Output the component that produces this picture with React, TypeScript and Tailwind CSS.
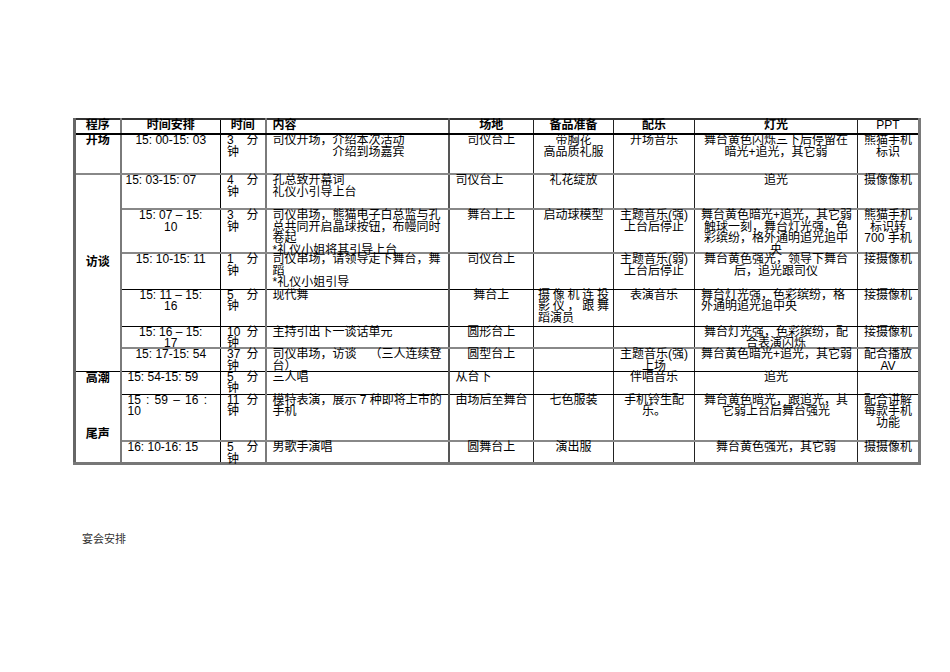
import React from "react";

const colR = [
  "border-r-2 border-r-[#7a7a7a]",
  "border-r border-r-black",
  "border-r-2 border-r-[#7a7a7a]",
  "border-r-2 border-r-[#555]",
  "border-r border-r-[#222]",
  "border-r border-r-[#222]",
  "border-r border-r-[#222]",
  "border-r border-r-[#222]",
  "border-r-[3px] border-r-[#7a7a7a]",
];

const rowB = [
  "border-b-2 border-b-black",
  "border-b-2 border-b-[#888]",
  "border-b-2 border-b-[#888]",
  "border-b-2 border-b-[#888]",
  "border-b border-b-black",
  "border-b border-b-black",
  "border-b-2 border-b-[#888]",
  "border-b border-b-black",
  "border-b border-b-black",
  "border-b-2 border-b-[#888]",
  "border-b-[3px] border-b-[#777]",
];

type CP = {
  r: number;
  c: number;
  a?: "c" | "l";
  span?: number;
  className?: string;
  children?: React.ReactNode;
};

function C({ r, c, a = "c", span, className = "", children }: CP) {
  const align = a === "c" ? "text-center" : "text-left";
  const last = r + (span ? span - 1 : 0);
  return (
    <td
      rowSpan={span}
      className={`p-0 align-top ${colR[c]} ${rowB[last]} ${
        c === 0 ? "border-l-[3px] border-l-[#666]" : ""
      } ${r === 0 ? "border-t-2 border-t-[#333]" : ""}`}
    >
      <div className={`h-0 px-[6px] whitespace-nowrap ${align} ${className}`}>
        {children}
      </div>
    </td>
  );
}

function L({ children, className = "" }: { children: React.ReactNode; className?: string }) {
  return <div className={`whitespace-nowrap ${className}`}>{children}</div>;
}

function J({ parts, className = "" }: { parts: string[]; className?: string }) {
  return (
    <div className={`flex justify-between whitespace-nowrap ${className}`}>
      {parts.map((p, i) => (
        <span key={i}>{p}</span>
      ))}
    </div>
  );
}

function T({ n }: { n: string }) {
  return (
    <>
      <J parts={[n, "分"]} />
      <L className="text-left">钟</L>
    </>
  );
}

export default function App() {
  return (
    <div className="w-[950px] h-[672px] bg-white pt-[118px] pl-[73px] font-['Liberation_Sans','Noto_Sans_CJK_SC',sans-serif] text-black">
      <table className="border-collapse table-fixed w-[845px] text-[12px] leading-[11.5px]">
        <colgroup>
          <col className="w-[46px]" />
          <col className="w-[100px]" />
          <col className="w-[45px]" />
          <col className="w-[183px]" />
          <col className="w-[85px]" />
          <col className="w-[80px]" />
          <col className="w-[81px]" />
          <col className="w-[163px]" />
          <col className="w-[62px]" />
        </colgroup>
        <tbody>
          <tr className="h-[15px]">
            <C r={0} c={0} className="font-bold">程序</C>
            <C r={0} c={1} className="font-bold">时间安排</C>
            <C r={0} c={2} className="font-bold">时间</C>
            <C r={0} c={3} a="l" className="font-bold">内容</C>
            <C r={0} c={4} className="font-bold">场地</C>
            <C r={0} c={5} className="font-bold">备品准备</C>
            <C r={0} c={6} className="font-bold">配乐</C>
            <C r={0} c={7} className="font-bold">灯光</C>
            <C r={0} c={8}>PPT</C>
          </tr>
          <tr className="h-[40px]">
            <C r={1} c={0} className="font-bold">开场</C>
            <C r={1} c={1}>15: 00-15: 03</C>
            <C r={1} c={2}><T n="3" /></C>
            <C r={1} c={3} a="l">
              <L>司仪开场，介绍本次活动</L>
              <L className="pl-[60px]">介绍到场嘉宾</L>
            </C>
            <C r={1} c={4}>司仪台上</C>
            <C r={1} c={5}>
              <L>带胸花</L>
              <L>高品质礼服</L>
            </C>
            <C r={1} c={6}>开场音乐</C>
            <C r={1} c={7}>
              <L>舞台黄色闪烁三下后停留在</L>
              <L>暗光+追光，其它弱</L>
            </C>
            <C r={1} c={8}>
              <L>熊猫手机</L>
              <L>标识</L>
            </C>
          </tr>
          <tr className="h-[35px]">
            <C r={2} c={0} span={6} className="font-bold pt-[82px]">访谈</C>
            <C r={2} c={1} a="l" className="!pl-[4px]">15: 03-15: 07</C>
            <C r={2} c={2}><T n="4" /></C>
            <C r={2} c={3} a="l">
              <L>孔总致开幕词</L>
              <L>礼仪小引导上台</L>
            </C>
            <C r={2} c={4} a="l">司仪台上</C>
            <C r={2} c={5}>礼花绽放</C>
            <C r={2} c={6}></C>
            <C r={2} c={7}>追光</C>
            <C r={2} c={8}>摄像像机</C>
          </tr>
          <tr className="h-[44px]">
            <C r={3} c={1}>
              <L>15: 07 – 15:</L>
              <L>10</L>
            </C>
            <C r={3} c={2}><T n="3" /></C>
            <C r={3} c={3} a="l">
              <L>司仪串场，熊猫电子白总监与孔</L>
              <L>总共同开启晶球按钮，布幔同时</L>
              <L>卷起</L>
              <L>*礼仪小姐将其引导上台</L>
            </C>
            <C r={3} c={4}>舞台上上</C>
            <C r={3} c={5}>启动球模型</C>
            <C r={3} c={6}>
              <L>主题音乐(强)</L>
              <L>上台后停止</L>
            </C>
            <C r={3} c={7}>
              <L>舞台黄色暗光+追光，其它弱</L>
              <L>触球一刻，舞台灯光强，色</L>
              <L>彩缤纷，格外通明追光追中</L>
              <L>央</L>
            </C>
            <C r={3} c={8}>
              <L>熊猫手机</L>
              <L>标识转</L>
              <L>700 手机</L>
            </C>
          </tr>
          <tr className="h-[36px]">
            <C r={4} c={1}>15: 10-15: 11</C>
            <C r={4} c={2}><T n="1" /></C>
            <C r={4} c={3} a="l">
              <L>司仪串场，请领导走下舞台，舞</L>
              <L>蹈</L>
              <L>*礼仪小姐引导</L>
            </C>
            <C r={4} c={4}>司仪台上</C>
            <C r={4} c={5}></C>
            <C r={4} c={6}>
              <L>主题音乐(弱)</L>
              <L>上台后停止</L>
            </C>
            <C r={4} c={7}>
              <L>舞台黄色强光，领导下舞台</L>
              <L>后，追光跟司仪</L>
            </C>
            <C r={4} c={8}>接摄像机</C>
          </tr>
          <tr className="h-[37px]">
            <C r={5} c={1}>
              <L>15: 11 – 15:</L>
              <L>16</L>
            </C>
            <C r={5} c={2}><T n="5" /></C>
            <C r={5} c={3} a="l">现代舞</C>
            <C r={5} c={4}>舞台上</C>
            <C r={5} c={5} a="l" className="!px-[4px]">
              <J parts={["摄", "像", "机", "连", "投"]} />
              <J parts={["影", "仪", "，", "跟", "舞"]} />
              <L>蹈演员</L>
            </C>
            <C r={5} c={6}>表演音乐</C>
            <C r={5} c={7} a="l">
              <L>舞台灯光强，色彩缤纷，格</L>
              <L>外通明追光追中央</L>
            </C>
            <C r={5} c={8}>接摄像机</C>
          </tr>
          <tr className="h-[22px]">
            <C r={6} c={1}>
              <L>15: 16 – 15:</L>
              <L>17</L>
            </C>
            <C r={6} c={2}><T n="10" /></C>
            <C r={6} c={3} a="l">主持引出下一谈话单元</C>
            <C r={6} c={4}>圆形台上</C>
            <C r={6} c={5}></C>
            <C r={6} c={6}></C>
            <C r={6} c={7}>
              <L>舞台灯光强，色彩缤纷，配</L>
              <L>合表演闪烁</L>
            </C>
            <C r={6} c={8}>接摄像机</C>
          </tr>
          <tr className="h-[23px]">
            <C r={7} c={1}>15: 17-15: 54</C>
            <C r={7} c={2}><T n="37" /></C>
            <C r={7} c={3} a="l">
              <J parts={["司仪串场，访谈", "（三人连续登"]} />
              <L>台）</L>
            </C>
            <C r={7} c={4}>圆型台上</C>
            <C r={7} c={5}></C>
            <C r={7} c={6}>
              <L>主题音乐(强)</L>
              <L>上场</L>
            </C>
            <C r={7} c={7}>舞台黄色暗光+追光，其它弱</C>
            <C r={7} c={8}>
              <L>配合播放</L>
              <L>AV</L>
            </C>
          </tr>
          <tr className="h-[23px]">
            <C r={8} c={0} span={3} className="font-bold">
              <L className="pt-[1px]">高潮</L>
              <L className="mt-[45px]">尾声</L>
            </C>
            <C r={8} c={1} a="l">15: 54-15: 59</C>
            <C r={8} c={2}><T n="5" /></C>
            <C r={8} c={3} a="l">三人唱</C>
            <C r={8} c={4} a="l">从台下</C>
            <C r={8} c={5}></C>
            <C r={8} c={6}>伴唱音乐</C>
            <C r={8} c={7}>追光</C>
            <C r={8} c={8}></C>
          </tr>
          <tr className="h-[47px]">
            <C r={9} c={1} a="l" className="!pr-[13px]">
              <J parts={["15", ":", "59", "–", "16", ":"]} />
              <L>10</L>
            </C>
            <C r={9} c={2}><T n="11" /></C>
            <C r={9} c={3} a="l">
              <L>模特表演，展示 7 种即将上市的</L>
              <L>手机</L>
            </C>
            <C r={9} c={4}>由场后至舞台</C>
            <C r={9} c={5}>七色服装</C>
            <C r={9} c={6}>
              <L>手机铃生配</L>
              <L>乐。</L>
            </C>
            <C r={9} c={7}>
              <L>舞台黄色暗光，跟追光，其</L>
              <L>它弱上台后舞台强光</L>
            </C>
            <C r={9} c={8}>
              <L>配合讲解</L>
              <L>每款手机</L>
              <L>功能</L>
            </C>
          </tr>
          <tr className="h-[22px]">
            <C r={10} c={1} a="l">16: 10-16: 15</C>
            <C r={10} c={2}><T n="5" /></C>
            <C r={10} c={3} a="l">男歌手演唱</C>
            <C r={10} c={4}>圆舞台上</C>
            <C r={10} c={5}>演出服</C>
            <C r={10} c={6}></C>
            <C r={10} c={7}>舞台黄色强光，其它弱</C>
            <C r={10} c={8}>摄摄像机</C>
          </tr>
        </tbody>
      </table>
      <div className="mt-[67px] pl-[9px] text-[11px] leading-[12px] text-[#333] font-['Noto_Sans_CJK_SC',sans-serif]">
        宴会安排
      </div>
    </div>
  );
}
